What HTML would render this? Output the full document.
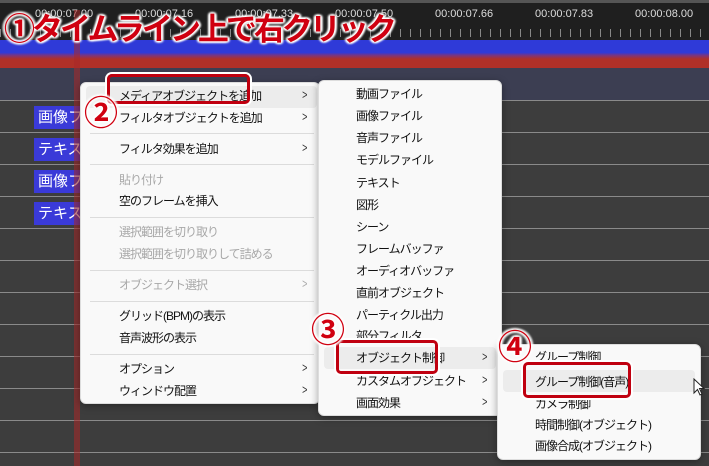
<!DOCTYPE html>
<html><head><meta charset="utf-8"><style>
*{margin:0;padding:0;box-sizing:border-box}
body{width:709px;height:466px;overflow:hidden;background:#3d3d3d;position:relative;font-family:"Liberation Sans","Noto Sans CJK JP",sans-serif;}
.abs{position:absolute}
.ruler{left:0;top:0;width:709px;height:40px;background:#1f1f1f;border-top:3px solid #555}
.tl{position:absolute;top:5px;color:#ddd;font-size:11px}
.hl{left:0;width:709px;height:1px;background:#8a8a8a}
.clip{left:34px;width:46px;height:23px;background:#3a3ad8;color:#fff;font-size:15px;line-height:23px;padding-left:4px;overflow:hidden;white-space:nowrap}
.menu{background:#f9f9f9;border:1px solid #ddd;border-radius:6px;box-shadow:0 2px 8px rgba(0,0,0,.35)}
.it{position:absolute;font-size:12px;color:#111;white-space:nowrap;letter-spacing:-1px}
.dis{color:#a8a8a8}
.ar{position:absolute;font-size:13px;color:#333;transform:scaleX(.7)}
.sep{position:absolute;height:1px;background:#dcdcdc}
.hi{position:absolute;background:#ececec;border-radius:4px}
.box{position:absolute;border:3px solid #c00010;border-radius:5px;box-shadow:0 0 0 2px #fff}
.num{position:absolute;color:#d00010;font-size:34px;font-weight:bold;line-height:1;text-shadow:0 0 2px #fff,0 0 3px #fff,1px 1px 2px #fff,-1px -1px 2px #fff,1px -1px 2px #fff,-1px 1px 2px #fff,2px 0 2px #fff,-2px 0 2px #fff}
</style></head><body>
<div class="abs ruler">
<span class="tl" style="left:35px">00:00:07.00</span>
<span class="tl" style="left:135px">00:00:07.16</span>
<span class="tl" style="left:235px">00:00:07.33</span>
<span class="tl" style="left:335px">00:00:07.50</span>
<span class="tl" style="left:435px">00:00:07.66</span>
<span class="tl" style="left:535px">00:00:07.83</span>
<span class="tl" style="left:635px">00:00:08.00</span>
</div>
<div class="abs" style="left:0;top:29px;width:709px;height:8px;background:repeating-linear-gradient(90deg,#888 0 1px,transparent 1px 10px)"></div>
<div class="abs" style="left:0;top:40px;width:709px;height:28px;background:linear-gradient(#2f3ad8 0,#2f3ad8 45%,#7a3580 55%,#b03028 68%,#b03028 100%)"></div>
<div class="abs" style="left:0;top:68px;width:709px;height:32px;background:#3c3e52"></div>
<div class="abs hl" style="top:100px"></div><div class="abs hl" style="top:132px"></div><div class="abs hl" style="top:164px"></div><div class="abs hl" style="top:196px"></div><div class="abs hl" style="top:228px"></div><div class="abs hl" style="top:260px"></div><div class="abs hl" style="top:292px"></div><div class="abs hl" style="top:324px"></div><div class="abs hl" style="top:356px"></div><div class="abs hl" style="top:388px"></div><div class="abs hl" style="top:420px"></div><div class="abs hl" style="top:452px"></div>
<div class="abs clip" style="top:106px">画像フ</div>
<div class="abs clip" style="top:138px">テキスト</div>
<div class="abs clip" style="top:170px">画像フ</div>
<div class="abs clip" style="top:202px">テキスト</div>
<div class="abs" style="left:74px;top:10px;width:6px;height:456px;background:rgba(170,40,40,.55)"></div>

<div class="abs menu" style="left:80px;top:82px;width:240px;height:322px">
<div class="hi" style="left:5px;top:3px;width:231px;height:22px"></div>
<span class="it" style="left:38px;top:4px">メディアオブジェクトを追加</span><span class="ar" style="left:220px;top:4px">&gt;</span>
<span class="it" style="left:38px;top:26px">フィルタオブジェクトを追加</span><span class="ar" style="left:220px;top:26px">&gt;</span>
<div class="sep" style="left:9px;top:50px;width:224px"></div>
<span class="it" style="left:38px;top:57px">フィルタ効果を追加</span><span class="ar" style="left:220px;top:57px">&gt;</span>
<div class="sep" style="left:9px;top:81px;width:224px"></div>
<span class="it dis" style="left:38px;top:88px">貼り付け</span>
<span class="it" style="left:38px;top:109px">空のフレームを挿入</span>
<div class="sep" style="left:9px;top:134px;width:224px"></div>
<span class="it dis" style="left:38px;top:140px">選択範囲を切り取り</span>
<span class="it dis" style="left:38px;top:162px">選択範囲を切り取りして詰める</span>
<div class="sep" style="left:9px;top:187px;width:224px"></div>
<span class="it dis" style="left:38px;top:193px">オブジェクト選択</span><span class="ar" style="left:220px;top:193px;color:#aaa">&gt;</span>
<div class="sep" style="left:9px;top:218px;width:224px"></div>
<span class="it" style="left:38px;top:224px">グリッド(BPM)の表示</span>
<span class="it" style="left:38px;top:246px">音声波形の表示</span>
<div class="sep" style="left:9px;top:271px;width:224px"></div>
<span class="it" style="left:38px;top:277px">オプション</span><span class="ar" style="left:220px;top:277px">&gt;</span>
<span class="it" style="left:38px;top:299px">ウィンドウ配置</span><span class="ar" style="left:220px;top:299px">&gt;</span>
</div>

<div class="abs menu" style="left:318px;top:80px;width:184px;height:336px">
<span class="it" style="left:37px;top:4px">動画ファイル</span>
<span class="it" style="left:37px;top:26px">画像ファイル</span>
<span class="it" style="left:37px;top:48px">音声ファイル</span>
<span class="it" style="left:37px;top:70px">モデルファイル</span>
<span class="it" style="left:37px;top:93px">テキスト</span>
<span class="it" style="left:37px;top:115px">図形</span>
<span class="it" style="left:37px;top:137px">シーン</span>
<span class="it" style="left:37px;top:159px">フレームバッファ</span>
<span class="it" style="left:37px;top:181px">オーディオバッファ</span>
<span class="it" style="left:37px;top:203px">直前オブジェクト</span>
<span class="it" style="left:37px;top:225px">パーティクル出力</span>
<span class="it" style="left:37px;top:246px">部分フィルタ</span>
<div class="hi" style="left:5px;top:266px;width:172px;height:22px"></div>
<span class="it" style="left:37px;top:268px">オブジェクト制御</span><span class="ar" style="left:162px;top:268px">&gt;</span>
<span class="it" style="left:37px;top:291px">カスタムオブジェクト</span><span class="ar" style="left:162px;top:291px">&gt;</span>
<span class="it" style="left:37px;top:313px">画面効果</span><span class="ar" style="left:162px;top:313px">&gt;</span>
</div>

<div class="abs menu" style="left:497px;top:344px;width:204px;height:116px">
<span class="it" style="left:37px;top:3px">グループ制御</span>
<div class="hi" style="left:5px;top:25px;width:192px;height:22px"></div>
<span class="it" style="left:37px;top:28px">グループ制御(音声)</span>
<span class="it" style="left:37px;top:50px">カメラ制御</span>
<span class="it" style="left:37px;top:71px">時間制御(オブジェクト)</span>
<span class="it" style="left:37px;top:92px">画像合成(オブジェクト)</span>
</div>
<svg class="abs" style="left:693px;top:378px" width="14" height="20" viewBox="0 0 14 20"><path d="M1 1 L1 15 L4.5 11.5 L7 17 L9 16 L6.5 10.5 L11 10.5 Z" fill="#fff" stroke="#222" stroke-width="1"/></svg>

<div class="box" style="left:107px;top:74px;width:143px;height:30px"></div>
<div class="box" style="left:336px;top:340px;width:102px;height:34px"></div>
<div class="box" style="left:523px;top:362px;width:108px;height:36px"></div>
<div class="num" style="left:84px;top:97px">②</div>
<div class="num" style="left:311px;top:314px">③</div>
<div class="num" style="left:498px;top:331px">④</div>
<div class="num" style="left:4px;top:14px;font-size:31px;letter-spacing:-3px">①タイムライン上で右クリック</div>
</body></html>
